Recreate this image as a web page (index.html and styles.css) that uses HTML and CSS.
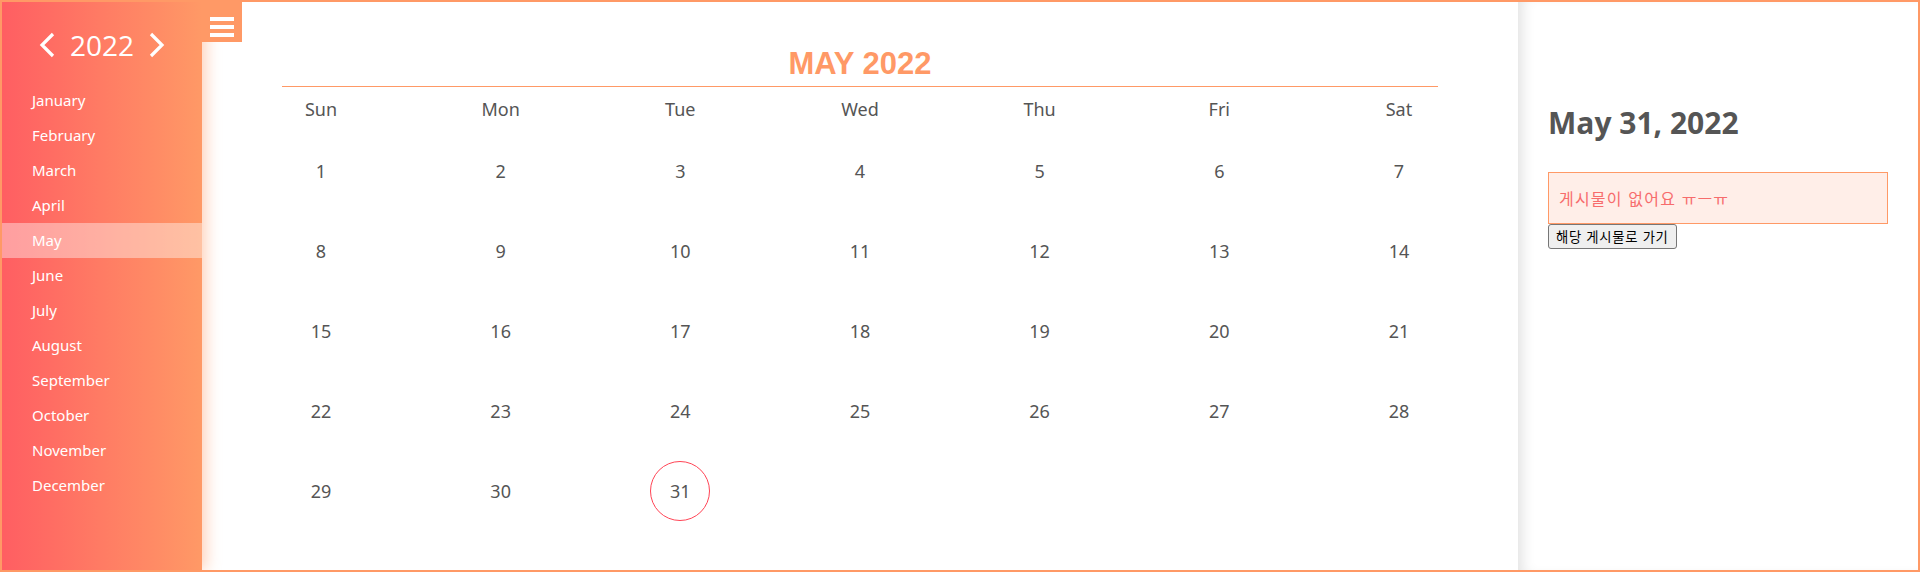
FILE: index.html
```html
<!DOCTYPE html>
<html lang="ko">
<head>
<meta charset="utf-8">
<title>Calendar</title>
<link rel="stylesheet" href="styles.css">
</head>
<body>
<div class="app">
  <aside class="sidebar">
    <div class="menu-btn">
      <span class="bar"></span><span class="bar"></span><span class="bar"></span>
    </div>
    <div class="year">
      <svg class="chev" width="16" height="26" viewBox="0 0 16 26"><path d="M14 2 L3 13 L14 24" fill="none" stroke="#fff" stroke-width="3.2"/></svg>
      <span class="year-num">2022</span>
      <svg class="chev" width="16" height="26" viewBox="0 0 16 26"><path d="M2 2 L13 13 L2 24" fill="none" stroke="#fff" stroke-width="3.2"/></svg>
    </div>
    <ul class="months">
      <li class="month">January</li>
      <li class="month">February</li>
      <li class="month">March</li>
      <li class="month">April</li>
      <li class="month active">May</li>
      <li class="month">June</li>
      <li class="month">July</li>
      <li class="month">August</li>
      <li class="month">September</li>
      <li class="month">October</li>
      <li class="month">November</li>
      <li class="month">December</li>
    </ul>
  </aside>
  <main class="calendar">
    <h1 class="cal-title">MAY 2022</h1>
    <div class="grid head">
      <div class="cell">Sun</div><div class="cell">Mon</div><div class="cell">Tue</div><div class="cell">Wed</div><div class="cell">Thu</div><div class="cell">Fri</div><div class="cell">Sat</div>
    </div>
    <div class="grid days">
      <div class="cell">1</div><div class="cell">2</div><div class="cell">3</div><div class="cell">4</div><div class="cell">5</div><div class="cell">6</div><div class="cell">7</div>
      <div class="cell">8</div><div class="cell">9</div><div class="cell">10</div><div class="cell">11</div><div class="cell">12</div><div class="cell">13</div><div class="cell">14</div>
      <div class="cell">15</div><div class="cell">16</div><div class="cell">17</div><div class="cell">18</div><div class="cell">19</div><div class="cell">20</div><div class="cell">21</div>
      <div class="cell">22</div><div class="cell">23</div><div class="cell">24</div><div class="cell">25</div><div class="cell">26</div><div class="cell">27</div><div class="cell">28</div>
      <div class="cell">29</div><div class="cell">30</div><div class="cell"><span class="today">31</span></div>
    </div>
  </main>
  <section class="panel">
    <h2 class="panel-date">May 31, 2022</h2>
    <div class="empty">게시물이 없어요 ㅠ—ㅠ</div>
    <button class="go-btn" type="button">해당 게시물로 가기</button>
  </section>
</div>
</body>
</html>
```
FILE: styles.css
```css
* { box-sizing: border-box; }
html, body { margin: 0; padding: 0; background: #fff; }
body { font-family: "Noto Sans", "Open Sans", sans-serif; }

.app {
  width: 1920px;
  height: 572px;
  border: 2px solid #ff9966;
  display: flex;
  overflow: hidden;
}

.sidebar {
  position: relative;
  z-index: 2;
  width: 200px;
  flex: 0 0 200px;
  background: linear-gradient(to right, #ff5e62, #ff9966);
  box-shadow: 4px 0 14px rgba(255, 153, 102, 0.45);
  padding-top: 23px;
}

.menu-btn {
  position: absolute;
  top: 0;
  right: -40px;
  width: 40px;
  height: 40px;
  background: #ff9966;
  display: flex;
  flex-direction: column;
  align-items: center;
  gap: 4px;
  padding-top: 15px;
}
.menu-btn .bar {
  display: block;
  width: 24px;
  height: 4px;
  background: #fff;
}

.year {
  height: 40px;
  display: flex;
  align-items: center;
  justify-content: center;
  gap: 15px;
  color: #fff;
}
.year-num {
  font-family: "Open Sans", "Noto Sans", sans-serif;
  font-size: 28px;
  line-height: 40px;
}
.chev { display: block; }

.months {
  list-style: none;
  margin: 18px 0 0;
  padding: 0;
}
.month {
  height: 35px;
  line-height: 35px;
  padding-left: 30px;
  color: #fff;
  font-size: 15px;
}
.month.active { background: rgba(255, 255, 255, 0.4); }

.calendar {
  flex: 1 1 auto;
  padding: 42px 80px 0;
  color: #555;
}
.cal-title {
  margin: 0;
  font-family: "Liberation Sans", Arial, sans-serif;
  font-weight: bold;
  font-size: 31px;
  line-height: 40px;
  text-align: center;
  color: #ff9966;
  padding-bottom: 2px;
  border-bottom: 1px solid #ff9966;
}
.grid {
  display: grid;
  grid-template-columns: repeat(7, 78px);
  justify-content: space-between;
}
.head .cell {
  height: 44px;
  display: flex;
  align-items: center;
  justify-content: center;
  font-size: 18px;
}
.days .cell {
  height: 80px;
  display: flex;
  align-items: center;
  justify-content: center;
  font-size: 18px;
}
.today {
  width: 60px;
  height: 60px;
  border: 1px solid #ff4455;
  border-radius: 50%;
  display: flex;
  align-items: center;
  justify-content: center;
}

.panel {
  flex: 0 0 400px;
  width: 400px;
  padding: 0 30px;
  box-shadow: inset 12px 0 14px -8px rgba(0, 0, 0, 0.12);
}
.panel-date {
  margin: 101px 0 29px;
  font-family: "Open Sans", "Noto Sans", sans-serif;
  font-weight: bold;
  font-size: 30px;
  line-height: 40px;
  color: #555;
}
.empty {
  height: 52px;
  border: 1px solid #ff9966;
  background: #ffeee8;
  color: #f76c6c;
  display: flex;
  align-items: center;
  padding: 0 10px;
  font-family: "Noto Sans CJK KR", sans-serif;
  font-size: 16px;
  letter-spacing: 1.2px;
}
.go-btn {
  display: block;
  height: 25px;
  padding: 0 7px;
  font-family: "Noto Sans CJK KR", sans-serif;
  font-size: 13.33px;
  letter-spacing: 0.7px;
  color: #000;
  background: #efefef;
  border: 1px solid #767676;
  border-radius: 3px;
}
```
